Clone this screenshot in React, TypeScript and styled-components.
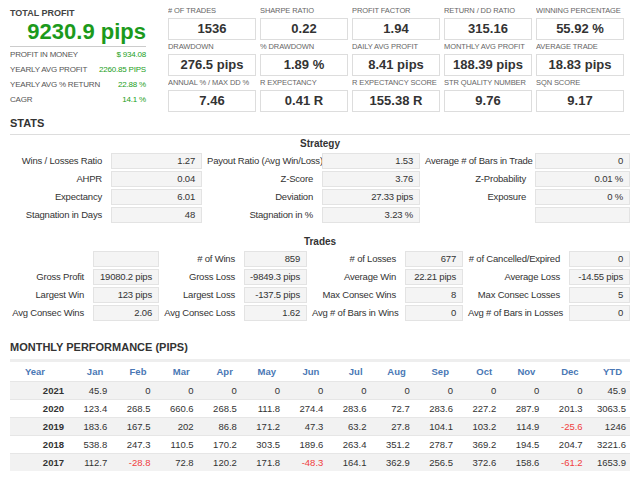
import React from "react";
import styled, { createGlobalStyle } from "styled-components";

const G = createGlobalStyle`
  body { margin: 0; background: #fff; font-family: "Liberation Sans", Arial, sans-serif; color: #333; }
`;
const Page = styled.div`padding: 6px 10px 0 10px; width: 620px;`;
const Top = styled.div`display: flex; gap: 22px;`;
const Left = styled.div`width: 136px;`;
const TotalLabel = styled.div`font-size: 9px; font-weight: bold; color: #444; margin-top: 2px;`;
const Big = styled.div`font-size: 22px; font-weight: bold; color: #1c9a1c; text-align: right; padding: 1px 0 1px; border-bottom: 1px solid #ccc;`;
const KV = styled.div`display: flex; justify-content: space-between; font-size: 8px; letter-spacing: -0.2px; height: 15px; align-items: center; color: #555; text-transform: uppercase; white-space: nowrap;
  &:first-of-type { margin-top: 3px; }`;
const GreenV = styled.span`color: #22a022;`;
const Grid5 = styled.div`display: grid; grid-template-columns: repeat(5, 88px); column-gap: 4px; row-gap: 2px;`;
const Cell = styled.div``;
const SmallLabel = styled.div`font-size: 7.5px; letter-spacing: -0.1px; color: #666; text-transform: uppercase; height: 12px; line-height: 10px; white-space: nowrap; overflow: hidden;`;
const ValBox = styled.div`border: 1px solid #ddd; height: 20px; line-height: 20px; text-align: center; font-weight: bold; font-size: 13px; color: #333;`;
const H = styled.div<{ $mt?: number }>`font-size: 11px; font-weight: bold; color: #333; margin-top: ${p => p.$mt ?? 0}px;`;
const Rule = styled.div`border-top: 1px solid #ddd; margin-top: 5px;`;
const SubTitle = styled.div<{ $mt?: number }>`text-align: center; font-size: 10px; font-weight: bold; margin: ${p => p.$mt ?? 3}px 0 4px;`;
const StatGrid = styled.div<{ $cols: string }>`display: grid; grid-template-columns: ${p => p.$cols}; row-gap: 2px;`;
const L = styled.div`font-size: 9.5px; letter-spacing: -0.2px; text-align: right; padding-right: 9px; height: 16px; line-height: 16px; white-space: nowrap; color: #333;`;
const B = styled.div<{ $last?: boolean }>`background: #f4f4f4; border: 1px solid #e3e3e3; height: 14px; line-height: 14px; font-size: 9.5px; letter-spacing: -0.2px; text-align: right; padding-right: 6px; margin-right: ${p => (p.$last ? 0 : 5)}px; white-space: nowrap;`;
const Table = styled.table`border-collapse: collapse; width: 620px; table-layout: fixed; margin-top: 6px; font-size: 9.5px; border-top: 3px solid #eee;`;
const Th = styled.th<{ $w?: number }>`color: #4a78b5; font-weight: bold; height: 19px; padding: 0 8px 0 0; text-align: right; ${p => (p.$w ? `width:${p.$w}px;` : "")}`;
const Tr = styled.tr<{ $alt: boolean }>`background: ${p => (p.$alt ? "#f2f2f2" : "#fff")}; border-top: 1px solid #e6e6e6;`;
const Td = styled.td<{ $neg?: boolean; $bold?: boolean }>`height: 17px; padding: 0 4px 0 0; text-align: right; color: ${p => (p.$neg ? "#f04040" : "#333")}; font-weight: ${p => (p.$bold ? "bold" : "normal")};`;

const top = [
  ["# of trades", "1536"], ["sharpe ratio", "0.22"], ["profit factor", "1.94"], ["return / dd ratio", "315.16"], ["winning percentage", "55.92 %"],
  ["drawdown", "276.5 pips"], ["% drawdown", "1.89 %"], ["daily avg profit", "8.41 pips"], ["monthly avg profit", "188.39 pips"], ["average trade", "18.83 pips"],
  ["annual % / max dd %", "7.46"], ["r expectancy", "0.41 R"], ["r expectancy score", "155.38 R"], ["str quality number", "9.76"], ["sqn score", "9.17"],
];
const strat = [
  ["Wins / Losses Ratio", "1.27", "Payout Ratio (Avg Win/Loss)", "1.53", "Average # of Bars in Trade", "0"],
  ["AHPR", "0.04", "Z-Score", "3.76", "Z-Probability", "0.01 %"],
  ["Expectancy", "6.01", "Deviation", "27.33 pips", "Exposure", "0 %"],
  ["Stagnation in Days", "48", "Stagnation in %", "3.23 %", "", ""],
];
const trades = [
  ["", "", "# of Wins", "859", "# of Losses", "677", "# of Cancelled/Expired", "0"],
  ["Gross Profit", "19080.2 pips", "Gross Loss", "-9849.3 pips", "Average Win", "22.21 pips", "Average Loss", "-14.55 pips"],
  ["Largest Win", "123 pips", "Largest Loss", "-137.5 pips", "Max Consec Wins", "8", "Max Consec Losses", "5"],
  ["Avg Consec Wins", "2.06", "Avg Consec Loss", "1.62", "Avg # of Bars in Wins", "0", "Avg # of Bars in Losses", "0"],
];
const months = ["Jan", "Feb", "Mar", "Apr", "May", "Jun", "Jul", "Aug", "Sep", "Oct", "Nov", "Dec", "YTD"];
const perf: [string, string[]][] = [
  ["2021", ["45.9", "0", "0", "0", "0", "0", "0", "0", "0", "0", "0", "0", "45.9"]],
  ["2020", ["123.4", "268.5", "660.6", "268.5", "111.8", "274.4", "283.6", "72.7", "283.6", "227.2", "287.9", "201.3", "3063.5"]],
  ["2019", ["183.6", "167.5", "202", "86.8", "171.2", "47.3", "63.2", "27.8", "104.1", "103.2", "114.9", "-25.6", "1246"]],
  ["2018", ["538.8", "247.3", "110.5", "170.2", "303.5", "189.6", "263.4", "351.2", "278.7", "369.2", "194.5", "204.7", "3221.6"]],
  ["2017", ["112.7", "-28.8", "72.8", "120.2", "171.8", "-48.3", "164.1", "362.9", "256.5", "372.6", "158.6", "-61.2", "1653.9"]],
];

const Rows = ({ data, cols }: { data: string[][]; cols: string }) => (
  <StatGrid $cols={cols}>
    {data.flatMap((r, i) =>
      r.map((c, j) =>
        j % 2 === 0 ? <L key={i + "-" + j}>{c}</L> : <B key={i + "-" + j} $last={j === r.length - 1}>{c}</B>
      )
    )}
  </StatGrid>
);

export default function App() {
  return (
    <Page>
      <G />
      <Top>
        <Left>
          <TotalLabel>TOTAL PROFIT</TotalLabel>
          <Big>9230.9 pips</Big>
          <KV><span>Profit in money</span><GreenV>$ 934.08</GreenV></KV>
          <KV><span>Yearly avg profit</span><GreenV>2260.85 PIPS</GreenV></KV>
          <KV><span>Yearly avg % return</span><GreenV>22.88 %</GreenV></KV>
          <KV><span>CAGR</span><GreenV>14.1 %</GreenV></KV>
        </Left>
        <Grid5>
          {top.map(([l, v]) => (
            <Cell key={l}>
              <SmallLabel>{l}</SmallLabel>
              <ValBox>{v}</ValBox>
            </Cell>
          ))}
        </Grid5>
      </Top>
      <H $mt={5}>STATS</H>
      <Rule />
      <SubTitle>Strategy</SubTitle>
      <Rows data={strat} cols="101px 96px 115px 103px 110px 95px" />
      <SubTitle $mt={13}>Trades</SubTitle>
      <Rows data={trades} cols="83px 71px 80px 68px 93px 63px 101px 61px" />
      <H $mt={20}>MONTHLY PERFORMANCE (PIPS)</H>
      <Table>
        <thead>
          <tr>
            <Th $w={50} style={{ textAlign: "center" }}>Year</Th>
            {months.map(m => <Th key={m}>{m}</Th>)}
          </tr>
        </thead>
        <tbody>
          {perf.map(([y, vals], i) => (
            <Tr key={y} $alt={i % 2 === 0}>
              <Td $bold>{y}</Td>
              {vals.map((v, j) => <Td key={j} $neg={v.startsWith("-")}>{v}</Td>)}
            </Tr>
          ))}
        </tbody>
      </Table>
    </Page>
  );
}
